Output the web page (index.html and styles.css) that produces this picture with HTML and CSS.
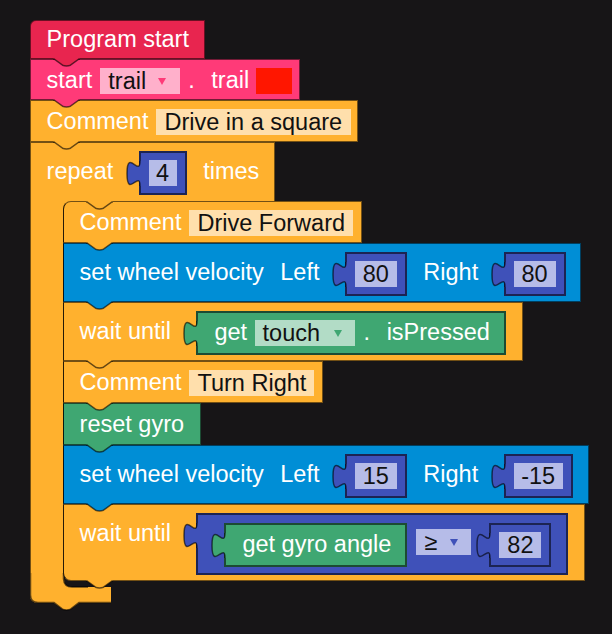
FILE: index.html
```
<!DOCTYPE html>
<html lang="en">
<head>
    <meta charset="UTF-8">
    <meta name="viewport" content="width=device-width, initial-scale=1.0">
    <title>Program</title>
    <link rel="stylesheet" href="styles.css">
</head>
<body>
    <!-- shared connector shapes -->
    <svg class="defs">
        <symbol id="notch" viewBox="0 0 27 10">
            <path class="shape" d="M0 0H27V2H26L17.5 8.2Q13.5 9.6 9.5 8.2L1 2H0Z"/>
            <path class="line" d="M0 2H1L9.5 8.2Q13.5 9.6 17.5 8.2L26 2H27"/>
        </symbol>
        <symbol id="tab" viewBox="0 0 17 27">
            <path class="shape" d="M17 1H15C15 17.6 2 -12.3 2 13.5S15 9.3 15 26H17Z"/>
            <path class="line" d="M15 1C15 17.6 2 -12.3 2 13.5S15 9.3 15 26"/>
        </symbol>
    </svg>

    <div class="workspace">
        <div class="block red start">
            <span>Program start</span>
            <svg class="notch"><use href="#notch"/></svg>
        </div>
        <div class="block pink trail">
            <span>start</span>
            <div class="field drop w-trail">trail<i class="arrow"></i></div>
            <span class="dot">.</span>
            <span class="next">trail</span>
            <div class="field swatch"></div>
            <svg class="notch"><use href="#notch"/></svg>
        </div>
        <div class="block yellow square">
            <span>Comment</span>
            <div class="field w-square">Drive in a square</div>
            <svg class="notch"><use href="#notch"/></svg>
        </div>

        <div class="block yellow tall repeat">
            <span>repeat</span>
            <div class="value indigo one-digit">
                <svg class="tab"><use href="#tab"/></svg>
                <div class="field">4</div>
            </div>
            <span class="next">times</span>
        </div>
        <div class="loop">
            <div class="arm"></div>
            <div class="mouth">
                <svg class="notch head-notch yellow"><use href="#notch"/></svg>
                <div class="block yellow forward">
                    <span>Comment</span>
                    <div class="field w-forward">Drive Forward</div>
                    <svg class="notch"><use href="#notch"/></svg>
                </div>
                <div class="block blue tall wheels">
                    <span>set wheel velocity</span>
                    <span class="next">Left</span>
                    <div class="value indigo">
                        <svg class="tab"><use href="#tab"/></svg>
                        <div class="field">80</div>
                    </div>
                    <span class="next">Right</span>
                    <div class="value indigo">
                        <svg class="tab"><use href="#tab"/></svg>
                        <div class="field">80</div>
                    </div>
                    <svg class="notch"><use href="#notch"/></svg>
                </div>
                <div class="block yellow tall wait-touch">
                    <span>wait until</span>
                    <div class="value green pressed">
                        <svg class="tab"><use href="#tab"/></svg>
                        <span>get</span>
                        <div class="field drop w-touch">touch<i class="arrow"></i></div>
                        <span class="dot">.</span>
                        <span class="next">isPressed</span>
                    </div>
                    <svg class="notch"><use href="#notch"/></svg>
                </div>
                <div class="block yellow turn">
                    <span>Comment</span>
                    <div class="field w-turn">Turn Right</div>
                    <svg class="notch"><use href="#notch"/></svg>
                </div>
                <div class="block green reset">
                    <span>reset gyro</span>
                    <svg class="notch"><use href="#notch"/></svg>
                </div>
                <div class="block blue tall wheels wheels-turn">
                    <span>set wheel velocity</span>
                    <span class="next">Left</span>
                    <div class="value indigo">
                        <svg class="tab"><use href="#tab"/></svg>
                        <div class="field">15</div>
                    </div>
                    <span class="next">Right</span>
                    <div class="value indigo negative">
                        <svg class="tab"><use href="#tab"/></svg>
                        <div class="field">-15</div>
                    </div>
                    <svg class="notch"><use href="#notch"/></svg>
                </div>
                <div class="block yellow tall wait-gyro">
                    <span>wait until</span>
                    <div class="value indigo compare">
                        <svg class="tab"><use href="#tab"/></svg>
                        <div class="value green angle">
                            <svg class="tab"><use href="#tab"/></svg>
                            <span>get gyro angle</span>
                        </div>
                        <div class="field drop w-op">≥<i class="arrow"></i></div>
                        <div class="value indigo limit">
                            <svg class="tab"><use href="#tab"/></svg>
                            <div class="field">82</div>
                        </div>
                    </div>
                    <svg class="notch"><use href="#notch"/></svg>
                </div>
            </div>
        </div>
        <svg class="foot yellow" viewBox="0 0 82 40">
            <path class="shape" d="M0 0H34V6Q34 14 42 14H81V30H49L40.5 36.2Q36.5 37.6 32.5 36.2L24 30H8Q0 30 0 22Z"/>
            <path class="line" d="M33.5 0V6Q34 14 42 14H58M81 29.5H49L40.5 36.2Q36.5 37.6 32.5 36.2L24 29.5H8Q.5 29.5 .5 22V0"/>
        </svg>
    </div>
</body>
</html>
```
FILE: styles.css
```
*{
    box-sizing: border-box;
}

body{
    margin: 0;
    height: 634px;
    overflow: hidden;
    background: #171517;
    color: white;
    font-family: "Liberation Sans", Arial, sans-serif;
    font-size: 23.5px;
    line-height: 26px;
}

.defs{
    position: absolute;
    width: 0;
    height: 0;
}

.workspace{
    padding: 20px 0 0 30px;
}

/* colours */
.red{
    --fill: #e8254f;
}
.pink{
    --fill: #ff3a78;
    --field: #ffb0cb;
}
.yellow{
    --fill: #ffb12e;
    --field: #ffdfac;
}
.blue{
    --fill: #008ed6;
}
.green{
    --fill: #3fa772;
    --field: #b2dcc6;
}
.indigo{
    --fill: #3f51b9;
    --field: #b6bce8;
}

/* blocks */
.block{
    position: relative;
    display: flex;
    align-items: flex-start;
    height: 42px;
    padding: 7px 0 0 15.6px;
    border: 1px solid rgba(0, 0, 0, .55);
    background: var(--fill);
}
.block span{
    white-space: pre;
}
.block .next{
    margin-left: 16.5px;
}
.tall{
    height: 59px;
    padding-top: 15px;
}

.start{
    width: 175px;
    height: 39px;
    padding-top: 5px;
    border-top-left-radius: 6px;
}
.trail{
    width: 270px;
    height: 41px;
}
.square{
    width: 328px;
}
.repeat{
    width: 245px;
    border-bottom: none;
}
.forward{
    width: 299px;
    border-top-left-radius: 8px;
}
.wheels{
    width: 518px;
}
.wait-touch{
    width: 460px;
}
.turn{
    width: 260px;
}
.reset{
    width: 138px;
}
.wheels-turn{
    width: 526px;
}
.wait-gyro{
    width: 522px;
    height: 77px;
    border-bottom-left-radius: 8px;
}

/* editable fields */
.field{
    height: 26px;
    margin: 1px 0 0 8px;
    padding-left: 8px;
    background: var(--field);
    color: #111;
    white-space: pre;
}
.drop{
    display: flex;
    align-items: center;
    justify-content: space-between;
    padding-right: 13px;
}
.arrow{
    border: 4px solid transparent;
    border-top: 7px solid var(--fill);
    border-bottom: none;
}
.dot{
    margin-left: 8px;
}
.w-trail{
    width: 80px;
    padding-right: 14px;
}
.swatch{
    width: 36px;
    margin-left: 7px;
    background: #ff1600;
}
.w-square{
    width: 195px;
}
.w-forward{
    width: 164px;
}
.w-turn{
    width: 125px;
}
.w-touch{
    width: 100px;
}
.w-op{
    width: 55px;
}

/* plugged in values */
.value{
    position: relative;
    display: flex;
    align-items: flex-start;
    width: 62px;
    height: 44px;
    margin: -7px 0 0 25.4px;
    padding: 6px 8px 0;
    border: 2px solid rgba(0, 0, 0, .55);
    background: var(--fill);
}
.value > .field{
    flex: 1;
    margin-left: 0;
    padding: 0;
    text-align: center;
}
.one-digit{
    width: 48px;
}
.negative{
    width: 69px;
}
.pressed{
    width: 310px;
    padding-left: 16px;
}
.pressed > .field, .compare > .field{
    flex: none;
    margin-left: 7.5px;
    padding: 0 13px 0 8px;
}
.pressed > .dot{
    margin-left: 9px;
}
.compare{
    width: 372px;
    height: 62px;
    padding: 8px 0 0 26px;
}
.compare > .value{
    margin: 0;
}
.compare > .field{
    margin: 6px 0 0 9px;
}
.angle{
    width: 183px;
    padding-left: 16px;
}
.compare > .limit{
    margin-left: 18px;
}

/* connectors */
.shape{
    fill: var(--fill);
}
.line{
    fill: none;
    stroke: rgba(0, 0, 0, .6);
    stroke-width: 1.5;
}
.notch{
    position: absolute;
    left: 22px;
    bottom: -9px;
    width: 27px;
    height: 10px;
    z-index: 1;
}
.tab{
    position: absolute;
    left: -16px;
    top: 7px;
    width: 17px;
    height: 27px;
}

/* loop */
.loop{
    display: flex;
}
.arm{
    width: 33px;
    background: #ffb12e;
    border-left: 1px solid rgba(0, 0, 0, .55);
    margin-bottom: 8px;
}
.mouth{
    position: relative;
    z-index: 1;
    background: linear-gradient(#ffb12e, #ffb12e) no-repeat 0 0 / 10px 10px;
}
.mouth > .block{
    border-left-color: rgba(0, 0, 0, .85);
}
.head-notch{
    top: -1px;
    left: 23px;
}
.foot{
    display: block;
    width: 82px;
    height: 40px;
    margin-top: -8px;
}
```
